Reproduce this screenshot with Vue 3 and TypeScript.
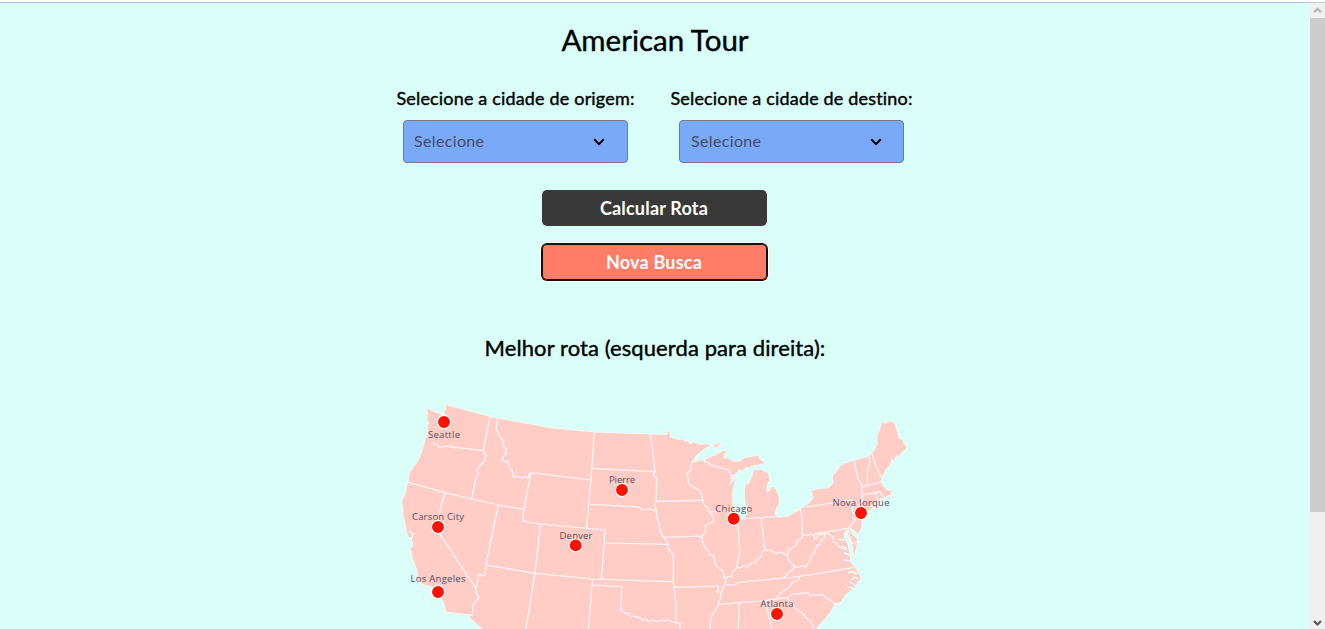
<script setup lang="ts">
interface City {
  name: string
  x: number
  y: number
  labelX: number
  labelY: number
  width: number
}

const fields = [
  { id: 'origem', label: 'Selecione a cidade de origem:' },
  { id: 'destino', label: 'Selecione a cidade de destino:' },
]

const cities: City[] = [
  { name: 'Seattle', x: 444, y: 422, labelX: 444, labelY: 438, width: 32 },
  { name: 'Pierre', x: 622, y: 490, labelX: 622, labelY: 483, width: 26 },
  { name: 'Carson City', x: 438, y: 527, labelX: 438, labelY: 520, width: 52 },
  { name: 'Denver', x: 575.7, y: 545.4, labelX: 576, labelY: 539, width: 33 },
  { name: 'Los Angeles', x: 438, y: 592, labelX: 438, labelY: 582, width: 55 },
  { name: 'Chicago', x: 733.7, y: 518.7, labelX: 733.7, labelY: 512, width: 37 },
  { name: 'Nova Iorque', x: 861, y: 513, labelX: 861, labelY: 506, width: 57 },
  { name: 'Atlanta', x: 777, y: 614, labelX: 777, labelY: 607, width: 33 },
]

const land =
  'M427.3 407.3L431 410 435 411.7 438.5 412.5 441 414.5 443 418 444.8 415.5 443.6 411 446 409 444.6 404.3 490 416.3 498.3 418.3 525 423 553 428 594.3 432 650 434 666.7 434.3 668 430 669.5 431.5 670.7 437.3 675 438 678.3 439.6 682 438.8 685 441 687 440.8 690 443.6 694 442 700 444.5 705 443.7 711.7 444.7 703.3 450 697 455 693.3 460 691.7 462 696 461.5 700 460 704 461 708 457.5 711.7 456 717 454 722 451 727.6 449.8 724 455.5 724 458 728 457.5 733.3 461.5 740 461 744 457.5 750 456.8 756 455.5 758 455 760.7 459.8 766 463.6 761 464.5 756.7 465.3 752 466 750 468 746 467.5 743 471 739 469.7 737 473 734 475 731.7 480 729.3 485 733 481 737 475.5 734 485 732.7 493 733.3 506.7 737 513 740 519 745 517.3 747.3 510 744.3 500 744.3 488.3 746.7 481 748 484 751.7 476.7 753 471 755 469.3 761 469.5 768.3 472.7 770 480 767 486 766.7 491.7 769 491 771 487 774 486.7 777 491 779.3 496.7 779 505 776 509 775 515 778.3 517.3 788.3 516 795 512 803.3 506.7 808 504 813.3 497.3 810.7 490.7 817 488.8 823.3 488.3 828 488 833.3 482.7 832.3 476 836 472 841.7 464 854 460 869.3 456 871.7 451.7 874 450.7 877.3 443.3 876.7 436.7 879 431 881.7 421.7 886 423.3 890 420.6 895 423.5 899.3 438.3 903 440 904 444 907.3 447.3 900.5 454 899 457.5 897 455 894.5 460 893 461.5 892 458.5 890.5 465 886.7 468.3 885 472 882 478 881.7 482 883.5 486.5 888 490.5 891.8 489.5 891.8 494 886 497.3 880 499 870 506.7 873 506 879 502.5 877 506 867 511.7 863 513 861.7 520 862.3 521 861.7 528.3 857.3 535.5 855.5 531.5 850 528 853 535 857.3 538.5 857.3 545 854 558.3 853 552 852 544 848.3 537 847.5 530 845 532 844.3 538 848.3 545 850 555 851 562.5 855 566.7 859 574 861 578.3 853.3 589 847 593.5 843.3 598.3 841 602.3 835 604 830 613.3 824 620 816.7 628.3 814 635 489 635 469 617.3 471 615 445.7 612.3 445 608 443.3 601.7 438 597 431.7 587 426 586 418.3 581.7 416.7 570 413 560 410 548 413 546 411.2 537 409 539 406.2 531.7 405.3 525 402.8 516.7 402.8 510 401.6 501 406 491.7 406 487 408 482.3 409.5 471.7 415 465 420 456.7 425.7 438.3 428 431 427 426 429 423 427 421z'

const borders = [
  'M433.3 441.7L434.3 444.3 438 445 439 447 450 446.3 455 447.7 466.7 448.3 484.3 451',
  'M490 416.3L483.3 450.3 486 455.5 485 460 476.7 470 478.5 474.5 476 478 471.7 499',
  'M408.3 482.3L445 492.7 471.7 499 498.3 505 524 509.3',
  'M497.7 418.3L496 428.3 500 437 503 440 502.5 445 506.5 449 505.7 454 503 457 502.3 460.5 505 462 507.7 460.5 510 469 512.3 471 513.3 476.7 519 476.7 522 478 524.5 476.5 528.3 478 529 474 531 472.7',
  'M531 472.7L590.7 480M594.3 432L591 480 587.3 520 586.7 529',
  'M531 472.7L524 509.3 522.7 521 540.7 524 605 530',
  'M445 492.7L440 510 438.3 531.7 476 588.3',
  'M498.3 505L486 565 485 575 482 576 480.5 574 478.3 575 477 585 476 588.3 476.5 594 479.3 597.5 475 602 472.3 606.7 473 610 471.7 616',
  'M486 565L535 573.3 593.3 579 660 581.3 674 581.7',
  'M540.7 524L535 573.3 526 629',
  'M605 530L601.7 579.3M604 543L668.3 544.3',
  'M592.7 579L592 585 588.3 631M592 585L621.7 586.7 620.7 611 624 611.5 625 613.5 628.3 613 630 616 636 616.5 641 618.3 643 620.5 646 619.3 648.5 621.7 653 620 656.7 621.5 661 620.3 664 621 668.3 619.3 672 622 680 623.3 680 631',
  'M591.7 468.3L655 471.7M650 434L651.5 442 652.7 450 654 463 655 471.7 653.3 475 656.7 478.3 656 501 655 507 656.7 512 656.7 516.7 659 523 660 530 662.7 536 666 540 668.3 544.3 668 548 673.3 555 673.3 581.7 674 587.3 676 603 676 621.7',
  'M589 504.3L635 506.7 639 507 642 510 650 509 655 511 656.7 514M656 501.3L702.7 500.3',
  'M650 471.5L655 471.5M662.7 537.3L700 536 701.7 538.3',
  'M691.7 462L690.7 470 686.7 474 688.3 478 688.3 483.3 692 486 700 490.7 701.5 494 702.7 500 704 505 708 508.3 709.3 512 713.3 516.7 713 522 707 524.3 705 527 706 532 702.5 535 701.7 540 704 546 709.3 551.7 710 555 714 556 714.3 561 716 566 723.3 571.7 724 577 726 579 724.5 585 721.7 591.7 720.5 598 718.3 604 716 610 712 615 711 620 709.5 623 710.7 631',
  'M708.3 512L733.3 511M704 461.7L709 463 711.7 465.7 718 466.7 728.3 470 730 473.7 732 475.5 731 479',
  'M737.7 523L740 553 738 559 736.7 568 732 572.5 731.7 577 728 576 726 579',
  'M740 519L775 516.7M761 517.7L765 550',
  'M736.7 567.7L740 568 744 565.3 747 567 751.7 563 755 563.7 756.7 559.5 761 557 762 552 766 550 771.7 551 776 553.7 780 552 786.7 555 787.3 554 789.3 550 793 547.5 796.7 545 797 541 801.7 538 802.3 533 801.7 515 800 509.3',
  'M786.7 555L788.5 560 795 566.7 799 567.3 802 565.7 805 567 809.5 562 811.7 555 814.5 553 816.7 545 820 544.3 821.7 540 825 537.5 825 533.3 821.7 534.7 819 534 815.3 539.5 813.3 535',
  'M802 533L804 535.7 848.3 528.3 855 520 852.3 517M825 533.3L829 534 833.3 537.7 834 542 837 543.5 839 547 846.7 550',
  'M795 566.7L790 572 783.5 578M726 585L737.3 584.5 737.3 582.5 790 577.5 813.3 574.3 854 567.3',
  'M718.3 604.3L760 601 786.7 597.7M800 576.7L797.5 580.5 793 582 788.3 588 780 593.3 776.7 598.3',
  'M786.7 597.7L791.7 594.3 808.3 592.7 810 595.7 821.7 594.3 835 604M786.7 597.7L792 603 795 608.3 802 613 806.7 618.3 811 622 814.3 629',
  'M674 587.3L718 586 718.7 589 716.7 592 721.7 592',
  'M739 603.3L738.3 631M765 601.7L772.5 631',
  'M806 507L851.7 500 854.5 504 851.7 509 853 513 856.7 516.7',
  'M854 460L856.7 473.3 857.5 478 860.5 482 861.7 487 862.3 501.7 858 506M869.3 456.7L870 463 867.7 468 867.3 483.7',
  'M871.7 452.7L876 466 881.7 478.3M861.7 486.7L878 483 881.7 481M862.3 495L880 491.7 882.5 497M876 492.7L877.3 499.3',
  'M848.3 528.3L851.3 543.3 857 542',
]

const inlets = [
  'M844 540L838 539.5M847 548L841 546.5M849 555L844 552.5M850 561L844 560',
  'M857 574L852 571.5 848 573M858 579L855 577 851 580M855 585L849 581.5M853 588L847 587',
  'M409 531L413 534 412 538',
]
</script>

<template>
  <div class="window">
    <main class="page">
      <h1>American Tour</h1>
      <form class="form" @submit.prevent>
        <div class="fields">
          <div v-for="field in fields" :key="field.id" class="field">
            <label :for="field.id">{{ field.label }}</label>
            <button :id="field.id" type="button" class="select">
              <span>Selecione</span>
              <svg class="chevron" viewBox="0 0 12 8"><path d="M1.2 1.3L6 6.1l4.8-4.8" /></svg>
            </button>
          </div>
        </div>
        <button type="button" class="action dark"><span>Calcular Rota</span></button>
        <button type="button" class="action coral"><span>Nova Busca</span></button>
      </form>
      <h2>Melhor rota (esquerda para direita):</h2>
      <svg class="map" viewBox="395 395 520 234">
        <path class="land" :d="land" />
        <path v-for="d in borders" :key="d" class="border" :d="d" />
        <path v-for="d in inlets" :key="d" class="inlet" :d="d" />
        <path class="isle" d="M713 445l8-2-5 5zM419 588l4 1M425 589l3 0M422 598l2 1M431 602l2 3M876 503l8-3M888 498l2 0M892 498l3-1" />
        <g v-for="city in cities" :key="city.name">
          <circle class="pin" :cx="city.x" :cy="city.y" r="6.6" />
          <text :x="city.labelX" :y="city.labelY" :textLength="city.width">{{ city.name }}</text>
        </g>
      </svg>
    </main>
    <aside class="scrollbar">
      <svg class="arrow up" viewBox="0 0 15 15"><path d="M4 9.2l3.5-3.5L11 9.2" /></svg>
      <div class="thumb"></div>
      <svg class="arrow down" viewBox="0 0 15 15"><path d="M4 7l3.5 3.5L11 7" /></svg>
    </aside>
  </div>
</template>

<style>
html,
body {
  margin: 0;
  overflow: hidden;
  background: #fff;
}
</style>

<style scoped>
* {
  box-sizing: border-box;
}
.window {
  display: flex;
  height: 629px;
  padding-top: 2px;
  overflow: hidden;
  font-family: Lato, "Open Sans", sans-serif;
}
.page {
  flex: 1;
  display: flex;
  flex-direction: column;
  align-items: center;
  border-top: 1px solid #a9c2cc;
  background: #d9fff8;
  overflow: hidden;
}
h1,
h2,
label,
.action span,
.select span {
  white-space: nowrap;
}
h1,
h2,
label {
  color: #000;
  font-weight: 400;
  -webkit-text-stroke: 0.4px #000;
}
h1 {
  margin: 17px 0 0;
  font-size: 29.5px;
  line-height: 40px;
}
.form {
  display: flex;
  flex-direction: column;
  align-items: center;
  padding-top: 26px;
}
.fields {
  display: grid;
  grid-template-columns: 276px 276px;
  padding-right: 2px;
  margin-right: 1px;
}
.field {
  display: flex;
  flex-direction: column;
  align-items: center;
}
label {
  font-size: 18px;
  line-height: 25px;
  margin-bottom: 9px;
  letter-spacing: 0.17px;
}
.select {
  display: flex;
  align-items: center;
  justify-content: space-between;
  width: 225px;
  height: 43px;
  padding: 0 22px 2px 10px;
  border: 1px solid #747887;
  border-radius: 4px;
  background: #7ba9fa;
  color: #424c60;
  font: 16px/24px Lato, "Open Sans", sans-serif;
  letter-spacing: 0.35px;
}
.chevron {
  width: 12px;
  height: 8px;
  margin-top: 2px;
}
.field:last-child .select {
  padding-left: 11px;
  padding-right: 21px;
}
.chevron path {
  fill: none;
  stroke: #000;
  stroke-width: 2;
}
.action {
  width: 225px;
  height: 36px;
  margin-right: 2px;
  padding: 0;
  border: 0;
  border-radius: 5px;
  color: #fff;
  font: 700 18px/26px Lato, "Open Sans", sans-serif;
  letter-spacing: 0.2px;
}
.dark {
  margin-top: 27px;
  background: #393939;
}
.coral {
  margin-top: 18px;
  background: #ff7d67;
  box-shadow: 0 0 0 1px #101010, inset 0 0 0 1px #101010, 0 0 0 2px #fff;
}
h2 {
  margin: 53px 0 0;
  font-size: 22px;
  line-height: 30px;
  letter-spacing: 0.09px;
}
.map {
  flex: none;
  width: 520px;
  height: 234px;
  margin-top: 32px;
}
.land {
  fill: #ffcdc6;
  stroke: #f5fffc;
  stroke-width: 0.8;
}
.border,
.inlet {
  fill: none;
  stroke: #fff7f5;
  stroke-width: 1.25;
  stroke-linejoin: round;
}
.inlet {
  stroke: #eafff9;
  stroke-width: 1.4;
}
.isle {
  fill: #ffcdc6;
  stroke: #ffe1dc;
}
.pin {
  fill: #ff1100;
  stroke: #fff;
  stroke-width: 1.3;
}
text {
  fill: #5d4a5e;
  font: 9.5px "Open Sans", "Noto Sans", sans-serif;
  text-anchor: middle;
}
.scrollbar {
  display: flex;
  flex-direction: column;
  width: 15px;
  border-top: 1px solid #c6cdd0;
  background: #f0f0f0;
}
.arrow {
  width: 15px;
  height: 15px;
  fill: none;
  stroke-width: 2;
}
.up {
  stroke: #b5b5b5;
}
.down {
  margin-top: auto;
  stroke: #555;
}
.thumb {
  height: 494px;
  background: #cdcdcd;
}
</style>
